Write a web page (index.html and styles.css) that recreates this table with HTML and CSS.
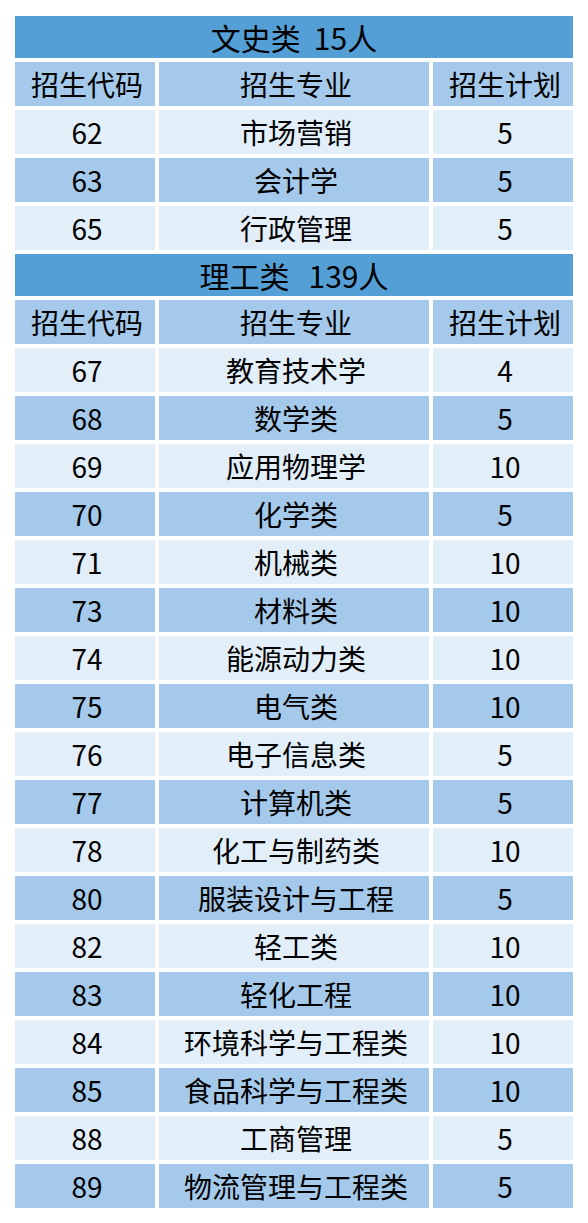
FILE: index.html
```html
<!DOCTYPE html>
<html lang="zh">
<head>
<meta charset="utf-8">
<link rel="stylesheet" href="styles.css">
</head>
<body>
<div class="table">
  <div class="cell title"><span>文史类</span><span class="num">15人</span></div>
  <div class="cell head">招生代码</div><div class="cell head">招生专业</div><div class="cell head">招生计划</div>
  <div class="cell light">62</div><div class="cell light">市场营销</div><div class="cell light">5</div>
  <div class="cell dark">63</div><div class="cell dark">会计学</div><div class="cell dark">5</div>
  <div class="cell light">65</div><div class="cell light">行政管理</div><div class="cell light">5</div>
  <div class="cell title"><span>理工类</span><span class="num wide">139人</span></div>
  <div class="cell head">招生代码</div><div class="cell head">招生专业</div><div class="cell head">招生计划</div>
  <div class="cell light">67</div><div class="cell light">教育技术学</div><div class="cell light">4</div>
  <div class="cell dark">68</div><div class="cell dark">数学类</div><div class="cell dark">5</div>
  <div class="cell light">69</div><div class="cell light">应用物理学</div><div class="cell light">10</div>
  <div class="cell dark">70</div><div class="cell dark">化学类</div><div class="cell dark">5</div>
  <div class="cell light">71</div><div class="cell light">机械类</div><div class="cell light">10</div>
  <div class="cell dark">73</div><div class="cell dark">材料类</div><div class="cell dark">10</div>
  <div class="cell light">74</div><div class="cell light">能源动力类</div><div class="cell light">10</div>
  <div class="cell dark">75</div><div class="cell dark">电气类</div><div class="cell dark">10</div>
  <div class="cell light">76</div><div class="cell light">电子信息类</div><div class="cell light">5</div>
  <div class="cell dark">77</div><div class="cell dark">计算机类</div><div class="cell dark">5</div>
  <div class="cell light">78</div><div class="cell light">化工与制药类</div><div class="cell light">10</div>
  <div class="cell dark">80</div><div class="cell dark">服装设计与工程</div><div class="cell dark">5</div>
  <div class="cell light">82</div><div class="cell light">轻工类</div><div class="cell light">10</div>
  <div class="cell dark">83</div><div class="cell dark">轻化工程</div><div class="cell dark">10</div>
  <div class="cell light">84</div><div class="cell light">环境科学与工程类</div><div class="cell light">10</div>
  <div class="cell dark">85</div><div class="cell dark">食品科学与工程类</div><div class="cell dark">10</div>
  <div class="cell light">88</div><div class="cell light">工商管理</div><div class="cell light">5</div>
  <div class="cell dark">89</div><div class="cell dark">物流管理与工程类</div><div class="cell dark">5</div>
</div>
</body>
</html>
```
FILE: styles.css
```css
html, body {
  margin: 0;
  padding: 0;
  background: #ffffff;
}
body {
  padding: 16px 15px 15px 15px;
  font-family: "Noto Sans CJK SC", "Noto Sans", sans-serif;
  color: #000000;
}
.table {
  display: grid;
  grid-template-columns: 140px 270px 140px;
  grid-auto-rows: auto;
  gap: 4px;
  width: 558px;
}
.cell {
  display: flex;
  align-items: center;
  justify-content: center;
  box-sizing: border-box;
  height: 44px;
  padding-left: 4px;
  font-size: 28px;
  line-height: 1;
  white-space: nowrap;
}
.title {
  grid-column: 1 / -1;
  height: 42px;
  padding-left: 0;
  font-size: 30px;
  background: #549fd6;
}
.title .num {
  margin-left: 13px;
}
.title .num.wide {
  margin-left: 19px;
}
.head, .dark {
  background: #a5c9ea;
}
.light {
  background: #e2eef8;
}
```
